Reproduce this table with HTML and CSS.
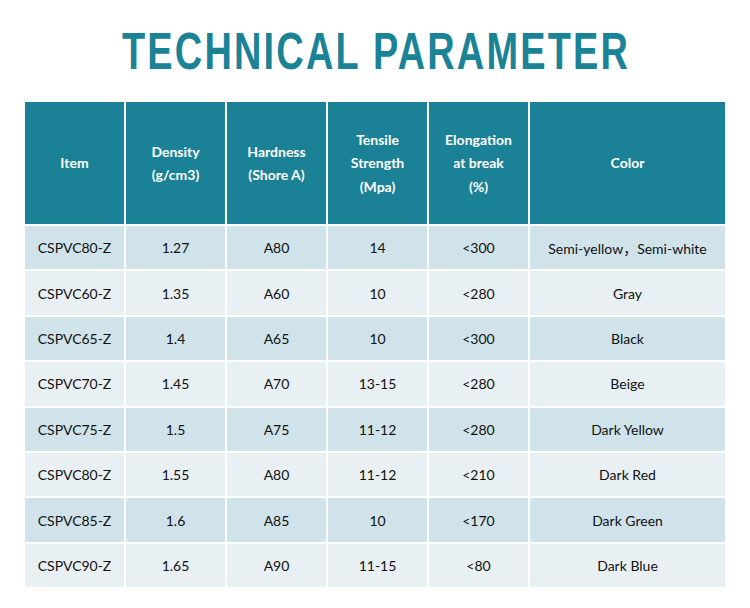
FILE: index.html
```html
<!DOCTYPE html>
<html>
<head>
<meta charset="utf-8">
<link rel="stylesheet" href="styles.css">
</head>
<body>
<div class="page">
  <h1 class="title"><span class="title-text">TECHNICAL PARAMETER</span></h1>
  <table class="params">
    <colgroup>
      <col class="c1"><col class="c2"><col class="c3"><col class="c4"><col class="c5"><col class="c6">
    </colgroup>
    <thead>
      <tr>
        <th>Item</th>
        <th>Density<br>(g/cm3)</th>
        <th>Hardness<br>(Shore A)</th>
        <th>Tensile<br>Strength<br>(Mpa)</th>
        <th>Elongation<br>at break<br>(%)</th>
        <th>Color</th>
      </tr>
    </thead>
    <tbody>
      <tr class="odd"><td>CSPVC80-Z</td><td>1.27</td><td>A80</td><td>14</td><td>&lt;300</td><td>Semi-yellow，Semi-white</td></tr>
      <tr class="even"><td>CSPVC60-Z</td><td>1.35</td><td>A60</td><td>10</td><td>&lt;280</td><td>Gray</td></tr>
      <tr class="odd"><td>CSPVC65-Z</td><td>1.4</td><td>A65</td><td>10</td><td>&lt;300</td><td>Black</td></tr>
      <tr class="even"><td>CSPVC70-Z</td><td>1.45</td><td>A70</td><td>13-15</td><td>&lt;280</td><td>Beige</td></tr>
      <tr class="odd"><td>CSPVC75-Z</td><td>1.5</td><td>A75</td><td>11-12</td><td>&lt;280</td><td>Dark Yellow</td></tr>
      <tr class="even"><td>CSPVC80-Z</td><td>1.55</td><td>A80</td><td>11-12</td><td>&lt;210</td><td>Dark Red</td></tr>
      <tr class="odd"><td>CSPVC85-Z</td><td>1.6</td><td>A85</td><td>10</td><td>&lt;170</td><td>Dark Green</td></tr>
      <tr class="even"><td>CSPVC90-Z</td><td>1.65</td><td>A90</td><td>11-15</td><td>&lt;80</td><td>Dark Blue</td></tr>
    </tbody>
  </table>
</div>
</body>
</html>
```
FILE: styles.css
```css
html, body {
  margin: 0;
  padding: 0;
  background: #ffffff;
}
.page {
  width: 750px;
  padding-top: 24px;
}
.title {
  margin: 0 0 20px 0;
  text-align: center;
  font-family: "Liberation Sans", Arial, sans-serif;
  font-weight: bold;
  font-size: 51px;
  line-height: 56px;
  color: #1b8396;
  white-space: nowrap;
}
.title-text {
  display: inline-block;
  letter-spacing: 3px;
  margin-right: -3px;
  transform: scaleX(0.743);
  transform-origin: center;
}
.params {
  margin-left: 23px;
  border-collapse: separate;
  border-spacing: 2px;
  table-layout: fixed;
  width: 704px;
  font-family: Lato, "Noto Sans CJK SC", sans-serif;
  font-size: 14px;
  color: #111111;
}
.c1, .c2, .c3, .c4, .c5 { width: 99px; }
.c6 { width: 195px; }
.params th {
  background: #1b8196;
  color: #ffffff;
  font-weight: bold;
  height: 122px;
  padding: 0;
  line-height: 23.5px;
  text-align: center;
  vertical-align: middle;
}
.params td {
  height: 43.4px;
  padding: 0;
  text-align: center;
  vertical-align: middle;
}
.odd td { background: #d0e3ea; }
.even td { background: #e8f0f4; }
```
